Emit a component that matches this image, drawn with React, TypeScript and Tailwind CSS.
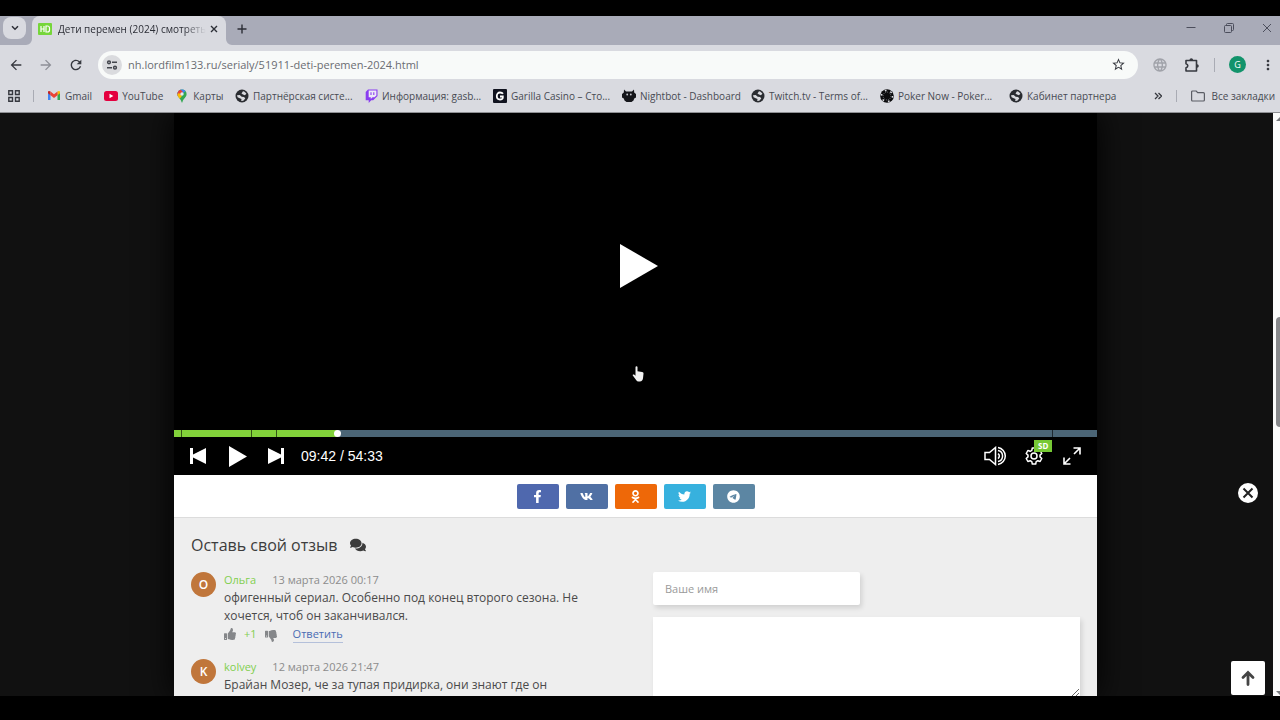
import { ReactNode } from "react";
import {
    FaComments,
    FaFacebookF,
    FaOdnoklassniki,
    FaThumbsDown,
    FaThumbsUp,
    FaTwitter,
    FaVk,
} from "react-icons/fa";
import { FaTelegram } from "react-icons/fa6";
import {
    MdArrowBack,
    MdArrowForward,
    MdLanguage,
    MdMoreVert,
    MdRefresh,
    MdStarBorder,
} from "react-icons/md";

function HdIcon() {
    return (
        <svg viewBox="0 0 14 12" className="w-[14px] h-3 shrink-0">
            <rect width="14" height="12" rx="1" fill="#76d63a" />
            <path
                d="M3 3v6M6 3v6M3 6h3M8 3v6h1.5a2 2 0 0 0 2-2V5a2 2 0 0 0-2-2z"
                fill="none"
                stroke="#fff"
                strokeWidth="1.2"
            />
        </svg>
    );
}

function TuneIcon() {
    return (
        <svg
            viewBox="0 0 12 12"
            className="size-3"
            fill="none"
            stroke="#43464d"
            strokeWidth="1.5"
        >
            <circle cx="3" cy="3.3" r="1.4" />
            <path d="M6 3.3h5M1 8.7h5" />
            <circle cx="9" cy="8.7" r="1.4" />
        </svg>
    );
}

function PuzzleIcon() {
    return (
        <svg viewBox="0 0 16 16" className="size-4" fill="none" stroke="currentColor" strokeWidth="1.6">
            <path
                d="M2 3.500h10.500v10.500H2v-3.300c2.400-.4 2.400-3.500 0-3.900z"
                strokeLinejoin="round"
            />
            <path d="M5.500 3a1.800 1.800 0 0 1 3.600 0zM13 7.200a1.800 1.800 0 0 1 0 3.600z" fill="currentColor" stroke="none" />
        </svg>
    );
}

function GmailIcon() {
    return (
        <svg viewBox="0 0 14 11" className="w-[14px] h-[11px]">
            <path d="M1 2v8h2.5V4z" fill="#4285f4" />
            <path d="M13 2v8h-2.500V4z" fill="#34a853" />
            <path d="M10.500 1.500v3.700L13 3.300V2c0-1.200-1.500-1.500-2.500-.5z" fill="#fbbc04" />
            <path d="M3.500 1.500v3.700L1 3.300V2C1 .8 2.500.5 3.500 1.500z" fill="#c5221f" />
            <path d="M3.500 1.500 7 4.300l3.500-2.800v3.700L7 8 3.500 5.200z" fill="#ea4335" />
        </svg>
    );
}

function YoutubeIcon() {
    return (
        <svg viewBox="0 0 14 10" className="w-[14px] h-[10px]">
            <rect width="14" height="10" rx="2.500" fill="#e4003f" />
            <path d="M5.500 2.800v4.400L9.300 5z" fill="#fff" />
        </svg>
    );
}

function MapsIcon() {
    return (
        <svg viewBox="0 0 12 14" className="w-3 h-[14px]">
            <clipPath id="pin">
                <path d="M6 .5a4.600 4.600 0 0 1 4.600 4.600c0 3.400-3.300 4.400-4.200 8.100-.1.500-.7.500-.8 0C4.700 9.500 1.400 8.500 1.400 5.100A4.600 4.600 0 0 1 6 .5z" />
            </clipPath>
            <g clipPath="url(#pin)">
                <rect width="12" height="14" fill="#34a853" />
                <path d="M0 10 12 0v-1H0z" fill="#4285f4" />
                <path d="M0 0h4l3 3-5 4-2-2z" fill="#ea4335" />
                <path d="M0 6 3 4l3 3-4 5z" fill="#fbbc04" />
            </g>
            <circle cx="6" cy="5" r="1.700" fill="#e8eaf0" />
        </svg>
    );
}

function GlobeIcon() {
    return (
        <svg viewBox="0 0 14 14" className="size-[14px]">
            <circle cx="7" cy="7" r="6.500" fill="#2a2c31" />
            <path
                d="M8 2.200c1.600.3 2.700 1.200 3.400 2.600L9.900 6.200 8 5.400 6.500 4.600z"
                fill="#d9dadf"
            />
            <path
                d="M2 6.300l2.700-.2 2 1.700 2.400.2 1.200 1.400-2 2.400-2.100.1.300-1.800-2.400-1.100L2.600 8.300z"
                fill="#d9dadf"
            />
        </svg>
    );
}

function TwitchIcon() {
    return (
        <svg viewBox="0 0 13 14" className="w-[13px] h-[14px]">
            <path d="M3 .5 .7 3v8.300h3V14l2.500-2.700h2L12.500 7V.5z" fill="#8a3df0" />
            <path d="M3.700 1.600h7.700v4.800L9.500 8.300h-2L5.800 10V8.300H3.700z" fill="#eceaf6" />
            <path d="M6 3.300v2.800M8.800 3.300v2.800" stroke="#8a3df0" strokeWidth="1.100" />
        </svg>
    );
}

function GarillaIcon() {
    return (
        <svg viewBox="0 0 14 14" className="size-[14px]">
            <rect width="14" height="14" rx="1" fill="#11131f" />
            <path
                d="M10 4.800C9.300 3.800 8.300 3.500 7 3.500c-2 0-3.200 1.500-3.200 3.500S5 10.500 7 10.500c1.400 0 2.600-.6 2.800-1.700V7.500H7"
                fill="none"
                stroke="#fff"
                strokeWidth="1.800"
            />
        </svg>
    );
}

function NightbotIcon() {
    return (
        <svg viewBox="0 0 14 14" className="size-[14px]" fill="#15161b">
            <path d="M2 .5 4 2.500h6L12 .5l.2 3 1.800 1.500v3.500l-1.800 1-.7 2L9.500 13h-5L2.500 11.500l-.7-2L0 8.500V5l1.800-1.500z" />
            <circle cx="5.200" cy="5.500" r=".9" fill="#c9cad2" />
            <circle cx="8.800" cy="5.500" r=".9" fill="#c9cad2" />
        </svg>
    );
}

function PokerIcon() {
    return (
        <svg viewBox="0 0 14 14" className="size-[14px]">
            <circle cx="7" cy="7" r="6.800" fill="#0b0b0d" />
            <circle
                cx="7"
                cy="7"
                r="5.500"
                fill="none"
                stroke="#dcdde2"
                strokeWidth="1.500"
                strokeDasharray="1.700 4.060"
            />
            <circle
                cx="7"
                cy="7"
                r="3.900"
                fill="none"
                stroke="#a9abb3"
                strokeWidth=".6"
                strokeDasharray="1 1"
            />
        </svg>
    );
}

const shortBookmarks = [
    { label: "Gmail", icon: <GmailIcon /> },
    { label: "YouTube", icon: <YoutubeIcon /> },
    { label: "Карты", icon: <MapsIcon /> },
];

const bookmarks = [
    { label: "Партнёрская систе...", icon: <GlobeIcon /> },
    { label: "Информация: gasb...", icon: <TwitchIcon /> },
    { label: "Garilla Casino – Сто...", icon: <GarillaIcon /> },
    { label: "Nightbot - Dashboard", icon: <NightbotIcon /> },
    { label: "Twitch.tv - Terms of...", icon: <GlobeIcon /> },
    { label: "Poker Now - Poker...", icon: <PokerIcon /> },
    { label: "Кабинет партнера", icon: <GlobeIcon /> },
];

function Bookmark({ label, icon }: { label: string; icon: ReactNode }) {
    return (
        <a href="#" className="flex items-center gap-1 whitespace-nowrap">
            <span className="flex w-[14px] shrink-0 justify-center">{icon}</span>
            {label}
        </a>
    );
}

function TabStrip() {
    return (
        <div className="flex h-[29px] items-stretch bg-[#a9abb8] text-[#2c2e36]">
            <button
                aria-label="Поиск вкладок"
                className="ml-[3px] mt-px flex h-[22px] w-[23px] items-center justify-center rounded-lg bg-[#d9dae0]"
            >
                <svg viewBox="0 0 8 6" className="w-2 h-[6px]" fill="none" stroke="currentColor" strokeWidth="1.500">
                    <path d="M1 1.200 4 4.200l3-3" />
                </svg>
            </button>
            <svg viewBox="0 0 6 6" className="size-[6px] self-end" fill="#d9dae0">
                <path d="M6 0v6H0a6 6 0 0 0 6-6z" />
            </svg>
            <div className="flex w-[194px] items-center rounded-t-lg bg-[#d9dae0] pl-[6px] pr-[6px] pb-1">
                <HdIcon />
                <span className="ml-[6px] whitespace-nowrap text-[10px] leading-4 mask-r-from-85% mask-r-to-100%">
                    Дети перемен (2024) смотреть
                </span>
                <button aria-label="Закрыть вкладку" className="ml-auto flex size-4 shrink-0 items-center justify-center">
                    <svg viewBox="0 0 8 8" className="size-2" stroke="currentColor" strokeWidth="1.400">
                        <path d="m1 1 6 6M7 1 1 7" />
                    </svg>
                </button>
            </div>
            <svg viewBox="0 0 6 6" className="size-[6px] self-end" fill="#d9dae0">
                <path d="M0 0v6h6a6 6 0 0 1-6-6z" />
            </svg>
            <button aria-label="Новая вкладка" className="ml-[2px] flex w-4 items-center justify-center pb-1">
                <svg viewBox="0 0 10 10" className="size-[10px]" stroke="currentColor" strokeWidth="1.400">
                    <path d="M5 .5v9M.5 5h9" />
                </svg>
            </button>
            <div className="ml-auto mr-2 flex items-center gap-7 pb-[6px] text-[#4c4e5c]">
                <button aria-label="Свернуть">
                    <svg viewBox="0 0 10 10" className="size-[10px]" stroke="currentColor">
                        <path d="M.5 4.500h9" />
                    </svg>
                </button>
                <button aria-label="Восстановить">
                    <svg viewBox="0 0 10 10" className="size-[10px]" fill="none" stroke="currentColor">
                        <rect x=".5" y="2.500" width="7" height="7" rx="1" />
                        <path d="M2.500 2.500V1.500a1 1 0 0 1 1-1h5a1 1 0 0 1 1 1v5a1 1 0 0 1-1 1h-1" />
                    </svg>
                </button>
                <button aria-label="Закрыть">
                    <svg viewBox="0 0 10 10" className="size-[10px]" stroke="currentColor">
                        <path d="m1 1 8 8M9 1 1 9" />
                    </svg>
                </button>
            </div>
        </div>
    );
}

function Toolbar() {
    return (
        <div className="flex h-[39px] items-center pl-2 pr-1 text-[#36383f]">
            <button aria-label="Назад">
                <MdArrowBack className="size-4" />
            </button>
            <button aria-label="Вперёд" className="ml-[14px] text-[#8d8f97]">
                <MdArrowForward className="size-4" />
            </button>
            <button aria-label="Обновить" className="ml-[14px]">
                <MdRefresh className="size-4" />
            </button>
            <div className="ml-[14px] flex h-7 flex-1 items-center rounded-full bg-[#f8faf9] pl-1 pr-3">
                <button
                    aria-label="Сведения о сайте"
                    className="flex size-5 items-center justify-center rounded-full bg-[#dadbde]"
                >
                    <TuneIcon />
                </button>
                <input
                    type="text"
                    aria-label="Адресная строка"
                    defaultValue="nh.lordfilm133.ru/serialy/51911-deti-peremen-2024.html"
                    className="ml-[6px] flex-1 bg-transparent text-[11px] leading-5 text-[#6a6c72] outline-none"
                />
                <button aria-label="Добавить в закладки">
                    <MdStarBorder className="size-[15px]" />
                </button>
            </div>
            <MdLanguage className="ml-[14px] size-4 text-[#a0a2a9]" />
            <button aria-label="Расширения" className="ml-4">
                <PuzzleIcon />
            </button>
            <span className="ml-[14px] h-[14px] w-px bg-[#a9abb4]" />
            <button
                aria-label="Профиль"
                className="ml-[14px] flex size-[17px] items-center justify-center rounded-full bg-[#12936b] text-[9px] text-white"
            >
                G
            </button>
            <button aria-label="Меню" className="ml-[14px]">
                <MdMoreVert className="size-4" />
            </button>
        </div>
    );
}

function BookmarksBar() {
    return (
        <nav className="flex h-7 items-center pl-2 pr-[5px] pb-[5px] text-[10px] leading-4 text-[#484a53]">
            <svg viewBox="0 0 12 12" className="size-3 shrink-0" fill="none" stroke="#36383f" strokeWidth="1.400">
                <path d="M.8.800h3.700v3.700H.8zM7.500.8h3.700v3.700H7.500zM.8 7.500h3.700v3.700H.8zM7.500 7.500h3.700v3.700H7.500z" />
            </svg>
            <span className="mx-[13px] h-3 w-px shrink-0 bg-[#a9abb4]" />
            <div className="flex w-[188px] shrink-0 gap-3">
                {shortBookmarks.map((b) => (
                    <Bookmark key={b.label} label={b.label} icon={b.icon} />
                ))}
            </div>
            {bookmarks.map((b) => (
                <div key={b.label} className="w-[129px] shrink-0">
                    <Bookmark label={b.label} icon={b.icon} />
                </div>
            ))}
            <button aria-label="Ещё закладки" className="ml-auto">
                <svg viewBox="0 0 8 8" className="size-2" fill="none" stroke="#36383f" strokeWidth="1.300">
                    <path d="M1 1l3 3-3 3M4.500 1l3 3-3 3" />
                </svg>
            </button>
            <span className="mx-[14px] h-3 w-px bg-[#a9abb4]" />
            <button className="flex items-center gap-[6px] whitespace-nowrap">
                <svg viewBox="0 0 14 12" className="w-[14px] h-3" fill="none" stroke="#5b5d65" strokeWidth="1.200">
                    <path d="M.6 2a1 1 0 0 1 1-1h3.600l1.500 1.700h5.700a1 1 0 0 1 1 1V10a1 1 0 0 1-1 1H1.600a1 1 0 0 1-1-1z" />
                </svg>
                Все закладки
            </button>
        </nav>
    );
}

const marks = [0.8, 8.3, 11, 95.1];

function Player() {
    return (
        <div className="bg-black text-white">
            <div className="relative flex h-[317px] items-center justify-center">
                <button aria-label="Смотреть" className="pb-3 pl-[6px]">
                    <svg viewBox="0 0 38 44" className="w-[38px] h-11" fill="currentColor">
                        <path d="M0 0v44l38-22z" />
                    </svg>
                </button>
                {/* mouse pointer */}
                <svg viewBox="0 0 12 16" className="absolute top-[253px] left-1/2 -ml-1 w-3 h-4" fill="#f2f2f2">
                    <path d="M3.500 1.200a1 1 0 0 1 2 0v4l4.600.8c1 .2 1.500.8 1.400 1.800l-.5 4.400c-.2 1.800-1.200 3.300-3.200 3.300H6.500c-1 0-1.700-.4-2.200-1.200L.8 9.600c-.5-.9.6-1.600 1.300-1l1.400 1.200z" />
                </svg>
            </div>
            <div className="relative h-[7px] bg-[#4b6576]">
                <div className="h-full w-[17.700%] bg-[#82d13a]" />
                {marks.map((m) => (
                    <span key={m} className="absolute top-0 h-full w-px bg-black/60" style={{ left: `${m}%` }} />
                ))}
                <span className="absolute top-0 left-[17.700%] -ml-[3px] size-[7px] rounded-full bg-white" />
            </div>
            <div className="flex h-[38px] items-center pl-4 pr-[15px]">
                <button aria-label="Предыдущая серия">
                    <svg viewBox="0 0 16 16" className="size-4" fill="currentColor">
                        <path d="M0 0h3v6.500L16 0v16L3 9.500V16H0z" />
                    </svg>
                </button>
                <button aria-label="Воспроизвести" className="ml-[23px]">
                    <svg viewBox="0 0 18 21" className="w-[18px] h-[21px]" fill="currentColor">
                        <path d="M0 0v21l18-10.500z" />
                    </svg>
                </button>
                <button aria-label="Следующая серия" className="ml-[21px]">
                    <svg viewBox="0 0 16 16" className="size-4" fill="currentColor">
                        <path d="M16 0h-3v6.500L0 0v16l13-6.500V16h3z" />
                    </svg>
                </button>
                <span className="ml-[17px] font-['Liberation_Sans',sans-serif] text-[14px] leading-5">
                    09:42 / 54:33
                </span>
                <button aria-label="Громкость" className="ml-auto">
                    <svg viewBox="0 0 24 20" className="w-6 h-5" fill="none" stroke="currentColor" strokeWidth="1.500">
                        <path d="M1 6.500h4.500L11.500 1.500v17l-6-5H1zM14 7.500a3 3 0 0 1 0 5M14 4.500a5.600 5.600 0 0 1 0 11M14 1.500a8.600 8.600 0 0 1 0 17" />
                    </svg>
                </button>
                <button aria-label="Настройки" className="relative ml-4">
                    <svg viewBox="0 0 20 20" className="size-5" fill="none" stroke="currentColor" strokeWidth="1.500">
                        <path
                            d="M8.300 2h3.400l.5 2.400 1.600.9 2.300-.8 1.700 3-1.800 1.600v1.800l1.800 1.600-1.700 3-2.300-.8-1.600.9-.5 2.400H8.300l-.5-2.400-1.600-.9-2.300.8-1.700-3L4 10.900V9.100L2.200 7.500l1.700-3 2.300.8 1.600-.9z"
                            strokeLinejoin="round"
                        />
                        <circle cx="10" cy="10" r="3" />
                    </svg>
                    <span className="absolute -top-[6px] left-[10px] bg-[#76c935] px-1 text-[8px] leading-3 font-bold">
                        SD
                    </span>
                </button>
                <button aria-label="На весь экран" className="ml-[18px]">
                    <svg viewBox="0 0 20 20" className="size-5" fill="none" stroke="currentColor" strokeWidth="1.600">
                        <path d="M11.500 2h6.500v6.500M18 2l-6 6M2 11.500V18h6.500M2 18l6-6" />
                    </svg>
                </button>
            </div>
        </div>
    );
}

function ShareBar() {
    return (
        <div className="flex h-[43px] justify-center gap-[7px] border-b border-[#dcdcdc] bg-white pt-[9px] text-[13px] text-white">
            <button aria-label="Facebook" className="flex h-[25px] w-[42px] items-center justify-center rounded-xs bg-[#4f68ae]">
                <FaFacebookF />
            </button>
            <button aria-label="ВКонтакте" className="flex h-[25px] w-[42px] items-center justify-center rounded-xs bg-[#5070a4]">
                <FaVk />
            </button>
            <button aria-label="Одноклассники" className="flex h-[25px] w-[42px] items-center justify-center rounded-xs bg-[#ee6808]">
                <FaOdnoklassniki />
            </button>
            <button aria-label="Twitter" className="flex h-[25px] w-[42px] items-center justify-center rounded-xs bg-[#37b1de]">
                <FaTwitter />
            </button>
            <button aria-label="Telegram" className="flex h-[25px] w-[42px] items-center justify-center rounded-xs bg-[#5c86a3]">
                <FaTelegram />
            </button>
        </div>
    );
}

type CommentProps = {
    letter: string;
    author: string;
    date: string;
    text: string;
    rating?: string;
};

const comments: CommentProps[] = [
    {
        letter: "О",
        author: "Ольга",
        date: "13 марта 2026 00:17",
        text: "офигенный сериал. Особенно под конец второго сезона. Не хочется, чтоб он заканчивался.",
        rating: "+1",
    },
    {
        letter: "K",
        author: "kolvey",
        date: "12 марта 2026 21:47",
        text: "Брайан Мозер, че за тупая придирка, они знают где он",
    },
];

function Comment({ letter, author, date, text, rating }: CommentProps) {
    return (
        <div className="flex gap-2">
            <div className="mt-px flex size-[25px] shrink-0 items-center justify-center rounded-full bg-[#c0763b] text-[12px] font-semibold text-white">
                {letter}
            </div>
            <div className="text-[12px] leading-[18px] text-[#4a4a4a]">
                <div className="flex gap-4 text-[11px] text-[#8c8c8c]">
                    <span className="font-medium text-[#82cf4e]">{author}</span>
                    <span>{date}</span>
                </div>
                <p>{text}</p>
                {rating && (
                    <div className="flex items-center text-[11px] text-[#85878a]">
                        <button aria-label="Нравится">
                            <FaThumbsUp className="size-3" />
                        </button>
                        <span className="ml-2 font-medium text-[#82cf4e]">{rating}</span>
                        <button aria-label="Не нравится" className="ml-2 mt-1">
                            <FaThumbsDown className="size-3" />
                        </button>
                        <a href="#" className="ml-4 border-b border-[#b4c0da] leading-4 text-[#4a6cb4]">
                            Ответить
                        </a>
                    </div>
                )}
            </div>
        </div>
    );
}

function Reviews() {
    return (
        <section className="bg-[#eeeeee] px-[17px] pt-4">
            <h2 className="flex items-center gap-[13px] text-[16px] leading-[22px] font-medium text-[#3c3c3c]">
                Оставь свой отзыв
                <FaComments className="size-4" />
            </h2>
            <div className="flex gap-10 pt-[15px]">
                <div className="flex flex-1 flex-col gap-[15px]">
                    {comments.map((c) => (
                        <Comment key={c.author} {...c} />
                    ))}
                </div>
                <form className="flex w-[427px] flex-col gap-3 pt-px">
                    <input
                        type="text"
                        aria-label="Ваше имя"
                        placeholder="Ваше имя"
                        className="h-[33px] w-[207px] rounded-xs bg-white px-3 text-[11px] shadow-[2px_3px_5px_#0000001f] outline-none placeholder:text-[#9a9a9a]"
                    />
                    <textarea
                        aria-label="Комментарий"
                        className="h-20 w-full bg-white p-3 text-[12px] shadow-[2px_3px_5px_#0000001f] outline-none"
                    />
                </form>
            </div>
        </section>
    );
}

function Scrollbar() {
    return (
        <div className="flex w-[7px] shrink-0 flex-col items-end overflow-hidden bg-[#fbfbfb]">
            <svg viewBox="0 0 4 4" className="mt-1 size-1" fill="#77797d">
                <path d="M4 0v4H0z" />
            </svg>
            <div className="mt-[196px] h-[110px] w-1 rounded-l-full bg-[#88898c]" />
            <svg viewBox="0 0 4 4" className="mt-auto mb-px size-1" fill="#77797d">
                <path d="M0 0h4v4z" />
            </svg>
        </div>
    );
}

function App() {
    return (
        <div className="flex h-screen flex-col overflow-hidden bg-black pt-4 pb-6 font-['Open_Sans',sans-serif]">
            <TabStrip />
            <header className="border-b border-[#8f9094] bg-[#d9dae0]">
                <Toolbar />
                <BookmarksBar />
            </header>
            <div className="relative flex min-h-0 flex-1">
                <main className="min-w-0 flex-1 overflow-hidden bg-[#111111] pr-[2px]">
                    <div className="mx-auto max-w-[923px] shadow-[0_0_30px_#000]">
                        <Player />
                        <ShareBar />
                        <Reviews />
                    </div>
                </main>
                <Scrollbar />
                <button
                    aria-label="Закрыть рекламу"
                    className="absolute top-[370px] right-[22px] flex size-5 items-center justify-center rounded-full bg-white text-[#222222]"
                >
                    <svg viewBox="0 0 12 12" className="size-3" stroke="currentColor" strokeWidth="2">
                        <path d="m1.500 1.500 9 9M10.500 1.500l-9 9" />
                    </svg>
                </button>
                <button
                    aria-label="Наверх"
                    className="absolute right-[15px] bottom-px flex size-[34px] items-center justify-center rounded-xs bg-white text-[#444444]"
                >
                    <svg
                        viewBox="0 0 14 16"
                        className="w-[14px] h-4"
                        fill="none"
                        stroke="currentColor"
                        strokeWidth="2.800"
                        strokeLinecap="round"
                    >
                        <path d="M7 14.500V3M2 7.500l5-5 5 5" />
                    </svg>
                </button>
            </div>
        </div>
    );
}

export default App;
